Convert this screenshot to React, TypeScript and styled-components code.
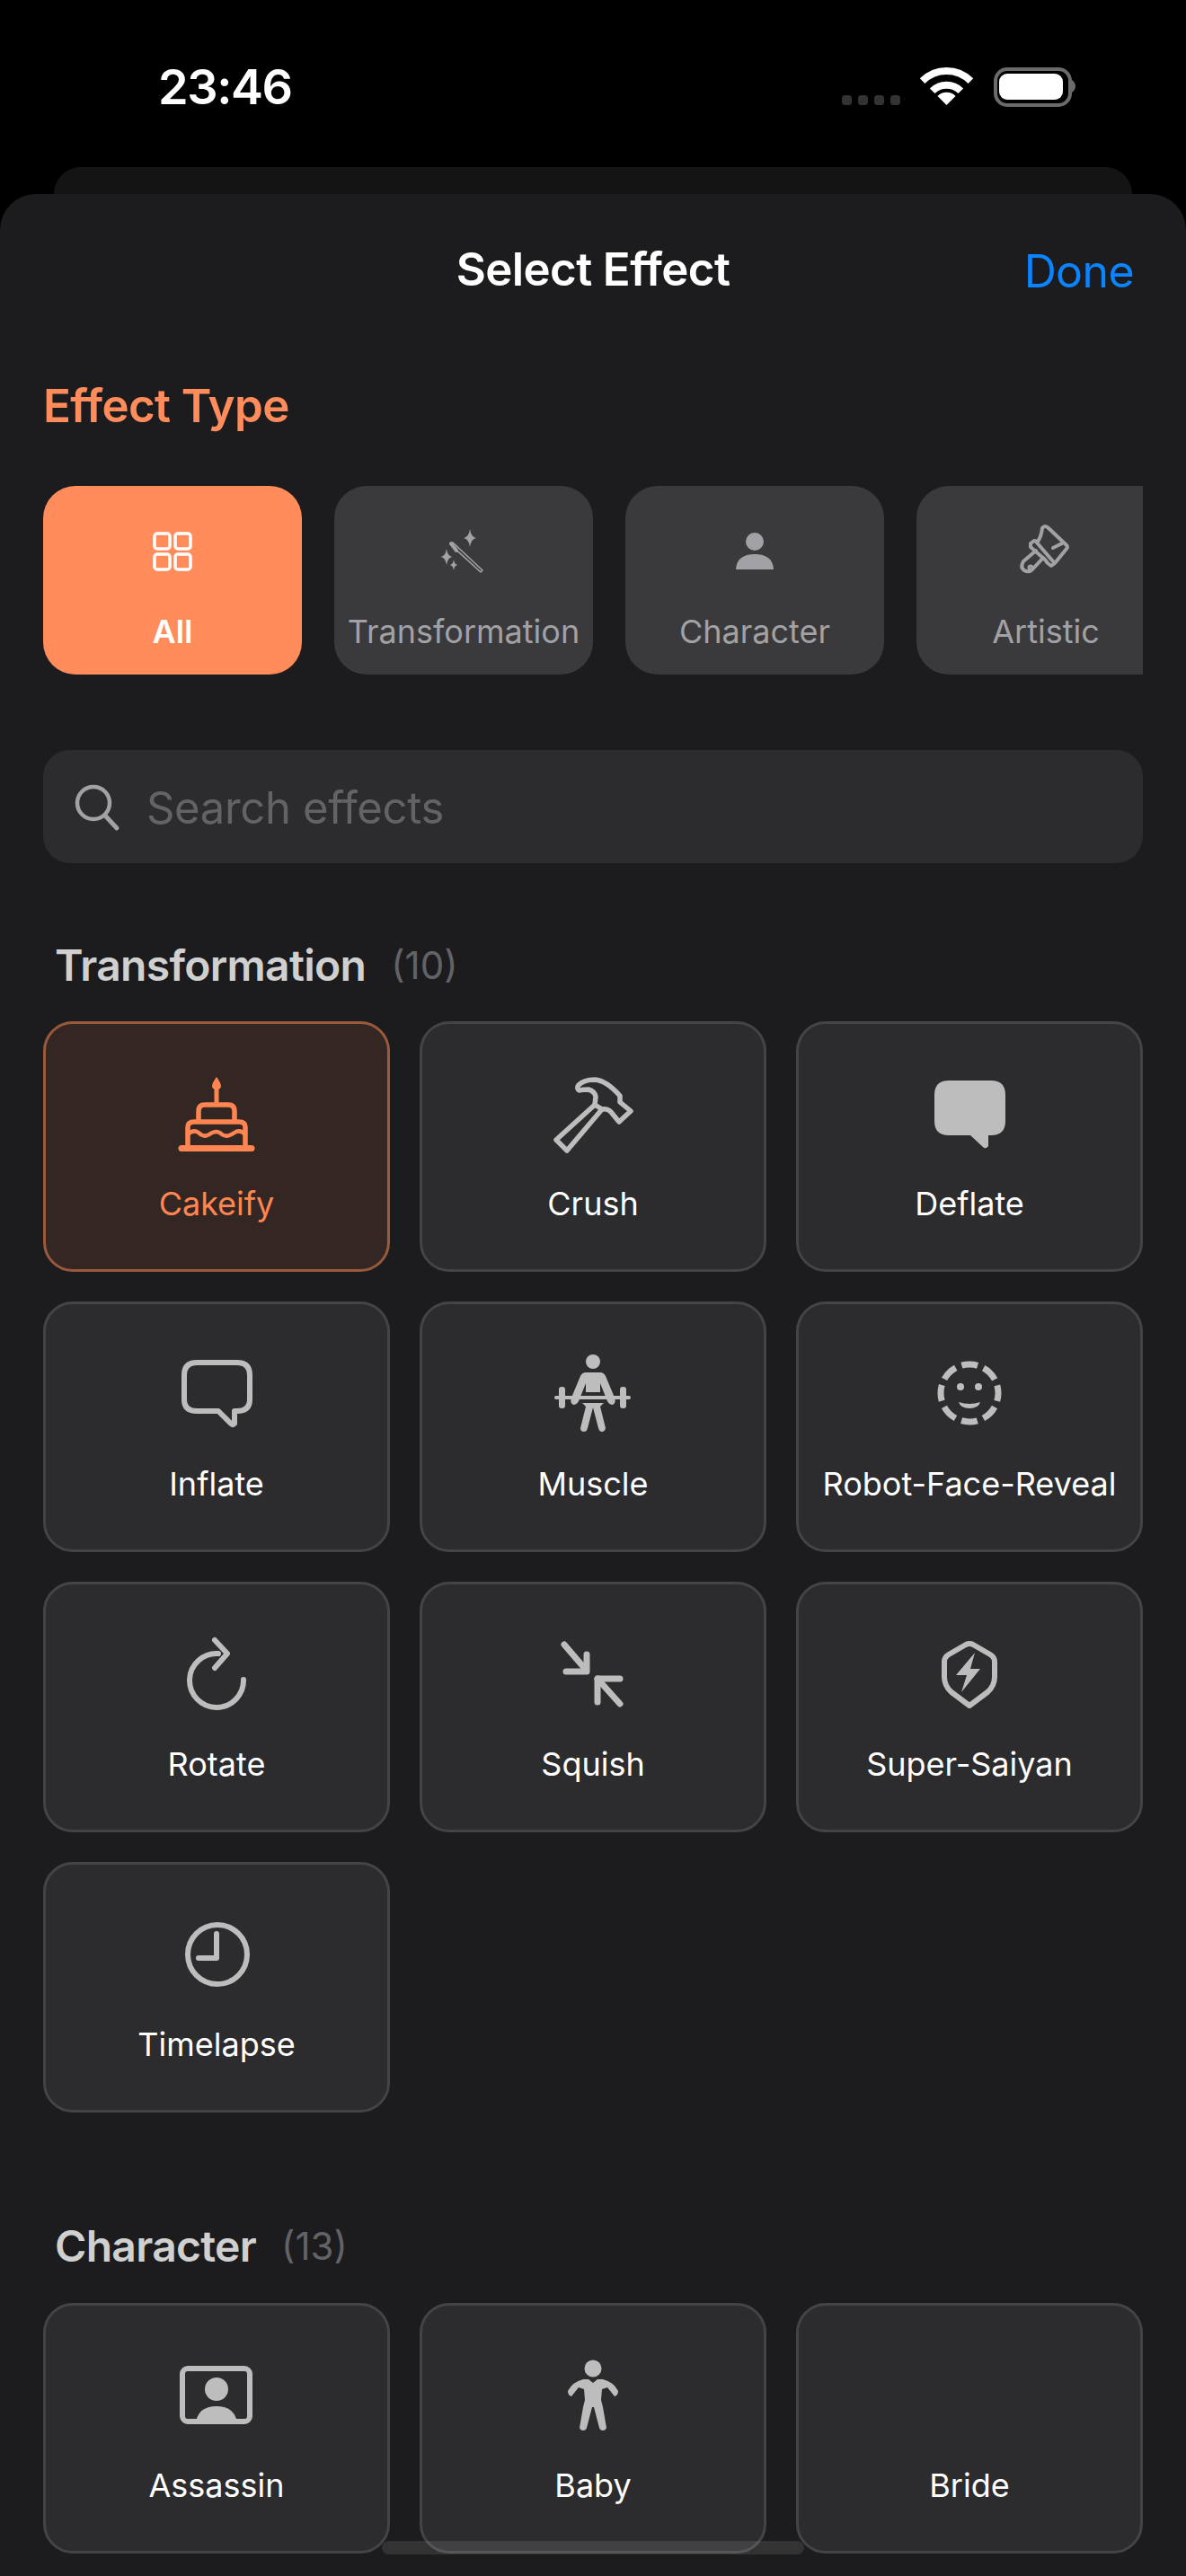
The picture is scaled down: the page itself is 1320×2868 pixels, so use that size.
import React from "react";
import styled, { createGlobalStyle } from "styled-components";

const Global = createGlobalStyle`
  html, body { margin: 0; padding: 0; background: #000; }
  * { box-sizing: border-box; }
  #root { font-family: Inter, "Noto Sans", sans-serif; -webkit-font-smoothing: antialiased; }
`;

const Page = styled.div`
  position: relative;
  width: 1320px;
  height: 2868px;
  overflow: hidden;
  background: #000;
  display: flex;
  flex-direction: column;
`;

const StatusBar = styled.div`
  height: 186px;
  flex-shrink: 0;
  display: flex;
  align-items: flex-start;
  justify-content: space-between;
  padding: 70px 123px 0 176px;
`;

const Time = styled.span`
  font-size: 54px;
  line-height: 54px;
  font-weight: 600;
  letter-spacing: -1.4px;
  color: #fff;
`;

const StatusIcons = styled.svg`
  width: 260px;
  height: 50px;
  display: block;
`;

const BackCard = styled.div`
  height: 30px;
  flex-shrink: 0;
  margin: 0 60px;
  background: #141415;
  border-radius: 30px 30px 0 0;
`;

const Sheet = styled.div`
  flex: 1;
  background: #1c1c1e;
  border-radius: 40px 40px 0 0;
  padding: 0 48px;
`;

const SheetHeader = styled.header`
  position: relative;
  height: 168px;
  display: flex;
  align-items: center;
  justify-content: center;
`;

const Title = styled.h1`
  margin: 0;
  font-size: 51px;
  line-height: 60px;
  font-weight: 600;
  letter-spacing: -0.6px;
  color: #fff;
`;

const DoneButton = styled.span`
  position: absolute;
  right: 10px;
  top: 56px;
  font-size: 50px;
  line-height: 60px;
  font-weight: 400;
  letter-spacing: -0.6px;
  color: #0a84ff;
`;

const TypeLabel = styled.h2`
  margin: 38px 0 59px;
  font-size: 51px;
  line-height: 60px;
  font-weight: 600;
  letter-spacing: -0.6px;
  color: #ff8c5a;
`;

const ChipRow = styled.div`
  display: flex;
  gap: 36px;
  height: 210px;
  overflow: hidden;
`;

const Chip = styled.div<{ $active?: boolean }>`
  flex: 0 0 288px;
  height: 210px;
  border-radius: 36px;
  padding-top: 34px;
  display: flex;
  flex-direction: column;
  align-items: center;
  gap: 26px;
  background: ${(p) => (p.$active ? "#ff8c5a" : "#3a3a3c")};
  color: ${(p) => (p.$active ? "#fff" : "#a1a1a6")};
`;

const ChipIcon = styled.svg`
  width: 100px;
  height: 80px;
  display: block;
  flex-shrink: 0;
`;

const ChipLabel = styled.span<{ $active?: boolean }>`
  font-size: 36px;
  line-height: 44px;
  font-weight: ${(p) => (p.$active ? 600 : 400)};
  white-space: nowrap;
`;

const SearchBar = styled.div`
  margin-top: 84px;
  height: 126px;
  border-radius: 30px;
  background: #2c2c2e;
  display: flex;
  align-items: center;
  padding-left: 29px;
  gap: 26px;
`;

const SearchIcon = styled.svg`
  width: 60px;
  height: 60px;
  display: block;
  color: #a1a1a6;
`;

const SearchText = styled.span`
  font-size: 49px;
  line-height: 60px;
  padding-top: 3px;
  color: #636366;
  letter-spacing: -0.35px;
`;

const Section = styled.section<{ $gap: number }>`
  margin-top: ${(p) => p.$gap}px;
`;

const SectionHeader = styled.div<{ $after: number }>`
  display: flex;
  align-items: center;
  gap: 28px;
  height: 60px;
  padding-left: 13px;
  margin-bottom: ${(p) => p.$after}px;
`;

const SectionName = styled.h3`
  margin: 0;
  font-size: 48px;
  line-height: 60px;
  font-weight: 600;
  letter-spacing: -0.7px;
  color: #d0d0d0;
`;

const SectionCount = styled.span`
  font-size: 42px;
  line-height: 60px;
  color: #636366;
`;

const Grid = styled.div`
  display: grid;
  grid-template-columns: repeat(3, 1fr);
  grid-auto-rows: 279px;
  gap: 33px;
`;

const Card = styled.div<{ $selected?: boolean }>`
  border-radius: 33px;
  border: 3px solid ${(p) => (p.$selected ? "#99593b" : "#444446")};
  background: ${(p) => (p.$selected ? "#342723" : "#2c2c2e")};
  padding-top: 45px;
  display: flex;
  flex-direction: column;
  align-items: center;
  gap: 20px;
  color: ${(p) => (p.$selected ? "#ff8652" : "#bdbdbd")};
`;

const CardIcon = styled.svg`
  width: 140px;
  height: 110px;
  display: block;
  flex-shrink: 0;
`;

const CardLabel = styled.span<{ $selected?: boolean }>`
  font-size: 36px;
  line-height: 50px;
  color: ${(p) => (p.$selected ? "#ff8652" : "#fff")};
  white-space: nowrap;
`;

const HomeIndicator = styled.div`
  position: absolute;
  left: 425px;
  bottom: 24px;
  width: 470px;
  height: 15px;
  border-radius: 8px;
  background: rgba(255, 255, 255, 0.1);
`;

const line = { fill: "none", stroke: "currentColor", strokeLinecap: "round", strokeLinejoin: "round" } as const;

const bubble =
  "M47 18 H94 Q110 18 110 34 V63 Q110 79 94 79 H91 V91 Q88 95 85 92 L71 79 H47 Q31 79 31 63 V34 Q31 18 47 18Z";
const bubbleOutline =
  "M48 20 H93 Q107 20 107 34 V61 Q107 74 93 74 H90 V88 Q88 90 86 88 L72 74 H48 Q34 74 34 61 V34 Q34 20 48 20Z";

const cardIcons: Record<string, React.ReactNode> = {
  Cakeify: (
    <>
      <path d="M70 14 Q75 21 75 24 Q75 28 70 28 Q65 28 65 24 Q65 21 70 14Z" fill="currentColor" />
      <path d="M70 26 V44" {...line} strokeWidth={5} />
      <path d="M50 62 V52 Q50 45 57 45 H83 Q90 45 90 52 V62" {...line} strokeWidth={5.5} />
      <path d="M38 92 V70 Q38 64 45 64 H95 Q102 64 102 70 V92" {...line} strokeWidth={5.5} />
      <path d="M38 78 Q44 72 50 76 Q56 82 62 78 Q70 72 76 78 Q82 82 90 76 Q96 72 102 78" {...line} strokeWidth={4.5} />
      <path d="M31 93.500 H109" {...line} strokeWidth={7} />
    </>
  ),
  Crush: (
    <g {...line} strokeWidth={5.5}>
      <path d="M72 45 L73 36 Q72 30 65 28 Q58 28 55 29 Q51 27 54 23 Q60 17 72 17 Q85 18 100 35 L100 42 L112 52 L99 64 L90 53 Q86 49 80 50 L72 45Z" />
      <path d="M72 45 L29 84 L41 96 L80 50" />
    </g>
  ),
  Deflate: <path d={bubble} fill="currentColor" />,
  Inflate: <path d={bubbleOutline} {...line} strokeWidth={6} />,
  Muscle: (
    <g transform="translate(0 -3)">
      <circle cx="70" cy="22" r="8" fill="currentColor" />
      <path d="M62 34 H78 Q82 34 84 38 L94 62 Q96 68 92 70 Q88 70 86 66 L78 46 V56 H62 V46 L54 66 Q52 70 48 70 Q44 68 46 62 L56 38 Q58 34 62 34Z" fill="currentColor" />
      <rect x="27" y="60" width="85" height="4" rx="2" fill="currentColor" />
      <rect x="32" y="50" width="7" height="24" rx="3" fill="currentColor" />
      <rect x="100" y="50" width="7" height="24" rx="3" fill="currentColor" />
      <path d="M58 68 H82 L78 72 L84 96 Q83 100 80 100 Q77 100 76 96 L70 73 L64 96 Q63 100 60 100 Q56 100 56 96 L62 72Z" fill="currentColor" />
    </g>
  ),
  "Robot-Face-Reveal": (
    <g transform="translate(0 -3)">
      <circle cx="70" cy="57" r="32" fill="none" stroke="currentColor" strokeWidth={7} strokeDasharray="18 7.13" strokeDashoffset={9} />
      <circle cx="60" cy="50" r="4" fill="currentColor" />
      <circle cx="80" cy="50" r="4" fill="currentColor" />
      <path d="M58 67 Q70 71 82 67 Q80 74 70 74 Q60 74 58 67Z" fill="currentColor" />
    </g>
  ),
  Rotate: (
    <g {...line} strokeWidth={6}>
      <path d="M72 32 A30 30 0 1 0 100 61" />
      <path d="M68 17 L82 32 L68 48" />
    </g>
  ),
  Squish: (
    <g {...line} strokeWidth={7} transform="translate(2 0)">
      <path d="M36 22 L60 50" />
      <path d="M38 52 H61 V33" />
      <path d="M98 88 L73 60" />
      <path d="M73 86 V60 H98" />
    </g>
  ),
  "Super-Saiyan": (
    <>
      <path d="M66 22 Q70 20 74 22 L93 33 Q98 36 98 41 V58 Q98 68 90 75 L70 90 L50 75 Q42 68 42 58 V41 Q42 36 47 33Z" {...line} strokeWidth={6} />
      <path d="M76 31 L55 56 H67 L61 75 L82 49 H71Z" fill="currentColor" />
    </>
  ),
  Timelapse: (
    <g {...line} strokeWidth={6}>
      <circle cx="71" cy="55" r="33" />
      <path d="M70 32 V59 H50" />
    </g>
  ),
  Assassin: (
    <>
      <rect x="32" y="25" width="75" height="59" rx="6" {...line} strokeWidth={6} />
      <circle cx="70" cy="48" r="13" fill="currentColor" />
      <path d="M47 86 Q49 67 70 67 Q91 67 93 86Z" fill="currentColor" />
    </>
  ),
  Baby: (
    <>
      <circle cx="70" cy="25" r="9.5" fill="currentColor" />
      <path d="M65 37 L70 41 L75 37 L81 37 Q93 40 98 50 Q98 55 94 56 L86 46 L80 48 L79 60 L81 68 L85 91 Q84 94 81 94 Q78 94 77 91 L71 68 L69 68 L63 91 Q62 94 59 94 Q56 94 55 91 L59 68 L61 60 L60 48 L54 46 L46 56 Q42 55 42 50 Q47 40 59 37Z" fill="currentColor" />
    </>
  ),
};

const GridGlyph = () => (
  <g fill="none" stroke="currentColor" strokeWidth={3.5}>
    <rect x="30" y="19" width="17" height="17" rx="3" />
    <rect x="53" y="19" width="17" height="17" rx="3" />
    <rect x="30" y="42" width="17" height="17" rx="3" />
    <rect x="53" y="42" width="17" height="17" rx="3" />
  </g>
);

const star = (x: number, y: number, r: number) =>
  `M${x} ${y - r} Q${x + r * 0.12} ${y - r * 0.12} ${x + r * 0.7} ${y} Q${x + r * 0.12} ${y + r * 0.12} ${x} ${y + r} Q${x - r * 0.12} ${y + r * 0.12} ${x - r * 0.7} ${y} Q${x - r * 0.12} ${y - r * 0.12} ${x} ${y - r}Z`;

const WandGlyph = () => (
  <>
    <path d="M36 30 L42 38" {...line} strokeWidth={4} />
    <path d="M38 29 L71 60 L69 62 L35 31Z" {...line} strokeWidth={1.6} />
    <path d={star(57, 24, 10)} fill="currentColor" />
    <path d={star(31, 45, 9)} fill="currentColor" />
    <path d={star(39, 54, 6)} fill="currentColor" />
  </>
);

const PersonGlyph = () => (
  <>
    <circle cx="50" cy="28" r="10" fill="currentColor" />
    <path d="M29 59 Q30 42 50 42 Q70 42 71 59Z" fill="currentColor" />
  </>
);

const BrushGlyph = () => (
  <g {...line} strokeWidth={4}>
    <path d="M46 13 Q49 9 53 13 L73 32 Q75 34 73 36 L60 52 L56 55 L52 52 L49 48 L33 34 L33 30 L37 27 L41 28 Q45 22 46 13Z" />
    <path d="M39 28 L58 50" />
    <path d="M39 38 L25 50 Q21 57 26 60 Q31 63 35 59 L47 46" />
    <path d="M58 35 L68 30" />
    <circle cx="33" cy="57" r="1.5" />
  </g>
);

const chips: { label: string; glyph: React.ReactNode; active?: boolean }[] = [
  { label: "All", glyph: <GridGlyph />, active: true },
  { label: "Transformation", glyph: <WandGlyph /> },
  { label: "Character", glyph: <PersonGlyph /> },
  { label: "Artistic", glyph: <BrushGlyph /> },
];

const sections = [
  {
    name: "Transformation",
    count: 10,
    gap: 84,
    after: 32,
    items: ["Cakeify", "Crush", "Deflate", "Inflate", "Muscle", "Robot-Face-Reveal", "Rotate", "Squish", "Super-Saiyan", "Timelapse"],
  },
  { name: "Character", count: 13, gap: 119, after: 33, items: ["Assassin", "Baby", "Bride"] },
];

export default function App() {
  return (
    <Page>
      <Global />
      <StatusBar>
        <Time>23:46</Time>
        <StatusIcons viewBox="0 0 260 50">
          {[0, 18, 36, 54].map((x) => (
            <rect key={x} x={x} y="36" width="11" height="11" rx="3.500" fill="#333" />
          ))}
          <g fill="none" stroke="#fff" strokeWidth={8}>
            <path d="M89.600 20.100 A38 38 0 0 1 143.400 20.100" />
            <path d="M100.700 31.200 A22.300 22.300 0 0 1 132.300 31.200" />
          </g>
          <path d="M116.500 47 L106.500 37 A14 14 0 0 1 126.500 37 Z" fill="#fff" />
          <rect x="171" y="7" width="83" height="40" rx="13" fill="none" stroke="#6b6b6b" strokeWidth={4} />
          <rect x="175" y="12" width="71" height="29" rx="9" fill="#fff" />
          <path d="M256 19 Q260 22 260 26 Q260 30 256 33Z" fill="#6b6b6b" />
        </StatusIcons>
      </StatusBar>
      <BackCard />
      <Sheet>
        <SheetHeader>
          <Title>Select Effect</Title>
          <DoneButton>Done</DoneButton>
        </SheetHeader>
        <TypeLabel>Effect Type</TypeLabel>
        <ChipRow>
          {chips.map((c) => (
            <Chip key={c.label} $active={c.active}>
              <ChipIcon viewBox="0 0 100 80">{c.glyph}</ChipIcon>
              <ChipLabel $active={c.active}>{c.label}</ChipLabel>
            </Chip>
          ))}
        </ChipRow>
        <SearchBar>
          <SearchIcon viewBox="0 0 60 60">
            <circle cx="27" cy="26" r="18" fill="none" stroke="currentColor" strokeWidth={4.5} />
            <path d="M40 40 L53 54" fill="none" stroke="currentColor" strokeWidth={5} strokeLinecap="round" />
          </SearchIcon>
          <SearchText>Search effects</SearchText>
        </SearchBar>
        {sections.map((s) => (
          <Section key={s.name} $gap={s.gap}>
            <SectionHeader $after={s.after}>
              <SectionName>{s.name}</SectionName>
              <SectionCount>({s.count})</SectionCount>
            </SectionHeader>
            <Grid>
              {s.items.map((item, i) => {
                const selected = s.count === 10 && i === 0;
                return (
                  <Card key={item} $selected={selected}>
                    <CardIcon viewBox="0 0 140 110">{cardIcons[item]}</CardIcon>
                    <CardLabel $selected={selected}>{item}</CardLabel>
                  </Card>
                );
              })}
            </Grid>
          </Section>
        ))}
      </Sheet>
      <HomeIndicator />
    </Page>
  );
}
